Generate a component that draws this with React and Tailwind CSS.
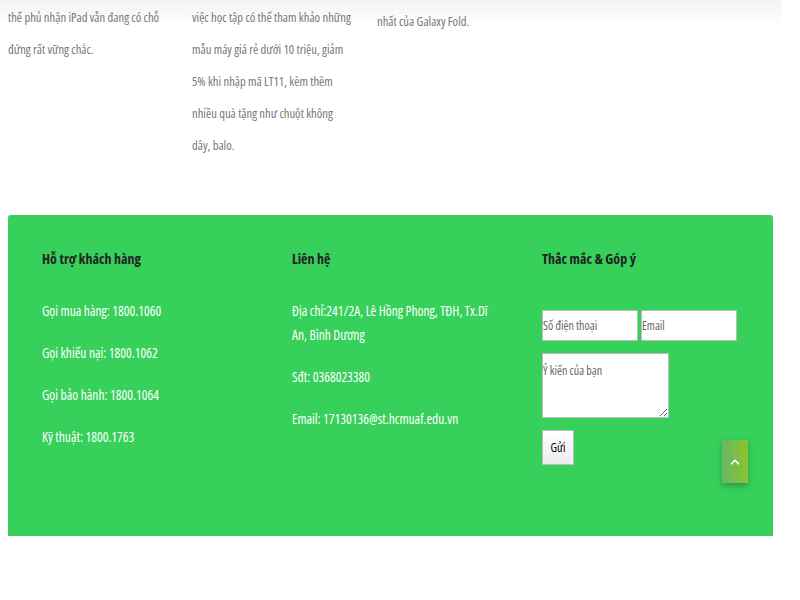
import { ChevronUp } from 'lucide-react'

const font = "font-['Open_Sans',sans-serif] font-stretch-condensed"

function TopArticles() {
  return (
    <div className={`w-[782px] h-[200px] bg-[linear-gradient(#f3f3f3,#ffffff_26px)] flex pl-2 pt-[2px] text-[12.6px] leading-[32px] text-[#777] ${font}`}>
      <p className="w-[168px] mr-[16px]">thể phủ nhận iPad vẫn đang có chỗ đứng rất vững chắc.</p>
      <p className="w-[160px] mr-[25px]">
        việc học tập có thể tham khảo những mẫu máy giá rẻ dưới 10 triệu, giảm 5% khi nhập mã LT11, kèm thêm nhiều quà tặng như chuột không dây, balo.
      </p>
      <p className="w-[170px] pt-[4px]">nhất của Galaxy Fold.</p>
    </div>
  )
}

function Column({ title, className, children }) {
  return (
    <div className={className}>
      <h4 className="text-[14px] font-bold text-[#222] leading-[20px] mb-[30px]">{title}</h4>
      {children}
    </div>
  )
}

function Line({ children }) {
  return <p className="leading-[24px] mb-[18px] text-[13.5px] text-white">{children}</p>
}

const field = 'bg-white border border-[#bbb] text-[12px] text-[#333] placeholder:text-[#666] outline-none'

export default function App() {
  return (
    <div className={`w-[800px] h-[600px] bg-white overflow-hidden relative ${font}`}>
      <TopArticles />
      <div className="mt-[15px] ml-2 w-[765px] h-[321px] bg-[#36d05a] rounded-t-[3px] flex pl-[34px] pt-[34px]">
        <Column title="Hỗ trợ khách hàng" className="w-[250px] shrink-0">
          <Line>Gọi mua hàng: 1800.1060</Line>
          <Line>Gọi khiếu nại: 1800.1062</Line>
          <Line>Gọi bảo hành: 1800.1064</Line>
          <Line>Kỹ thuật: 1800.1763</Line>
        </Column>
        <Column title="Liên hệ" className="w-[250px] shrink-0">
          <div className="w-[212px]">
            <Line>Địa chỉ:241/2A, Lê Hồng Phong, TĐH, Tx.Dĩ An, Bình Dương</Line>
          </div>
          <Line>Sđt: 0368023380</Line>
          <Line>Email: 17130136@st.hcmuaf.edu.vn</Line>
        </Column>
        <Column title="Thắc mắc & Góp ý" className="flex-1">
          <div className="mt-[41px] flex gap-[3px]">
            <input placeholder="Số điện thoại" className={`w-[96px] h-[31px] px-0 ${field}`} />
            <input placeholder="Email" className={`w-[96px] h-[31px] px-0 ${field}`} />
          </div>
          <textarea placeholder="Ý kiến của bạn" className={`block mt-[12px] w-[127px] h-[65px] px-0 pt-[8px] ${field}`} />
          <button className="mt-[12px] w-[32px] h-[35px] bg-[linear-gradient(#ffffff,#ececec)] border border-[#bbb] text-[12px] text-black">
            Gửi
          </button>
        </Column>
      </div>
      <button className="absolute left-[722px] top-[440px] w-[26px] h-[43px] bg-[linear-gradient(90deg,#6ab766,#8bc32f)] shadow-[0_3px_6px_rgba(0,0,0,0.25)] flex items-center justify-center text-white">
        <ChevronUp size={14} strokeWidth={3} />
      </button>
    </div>
  )
}
